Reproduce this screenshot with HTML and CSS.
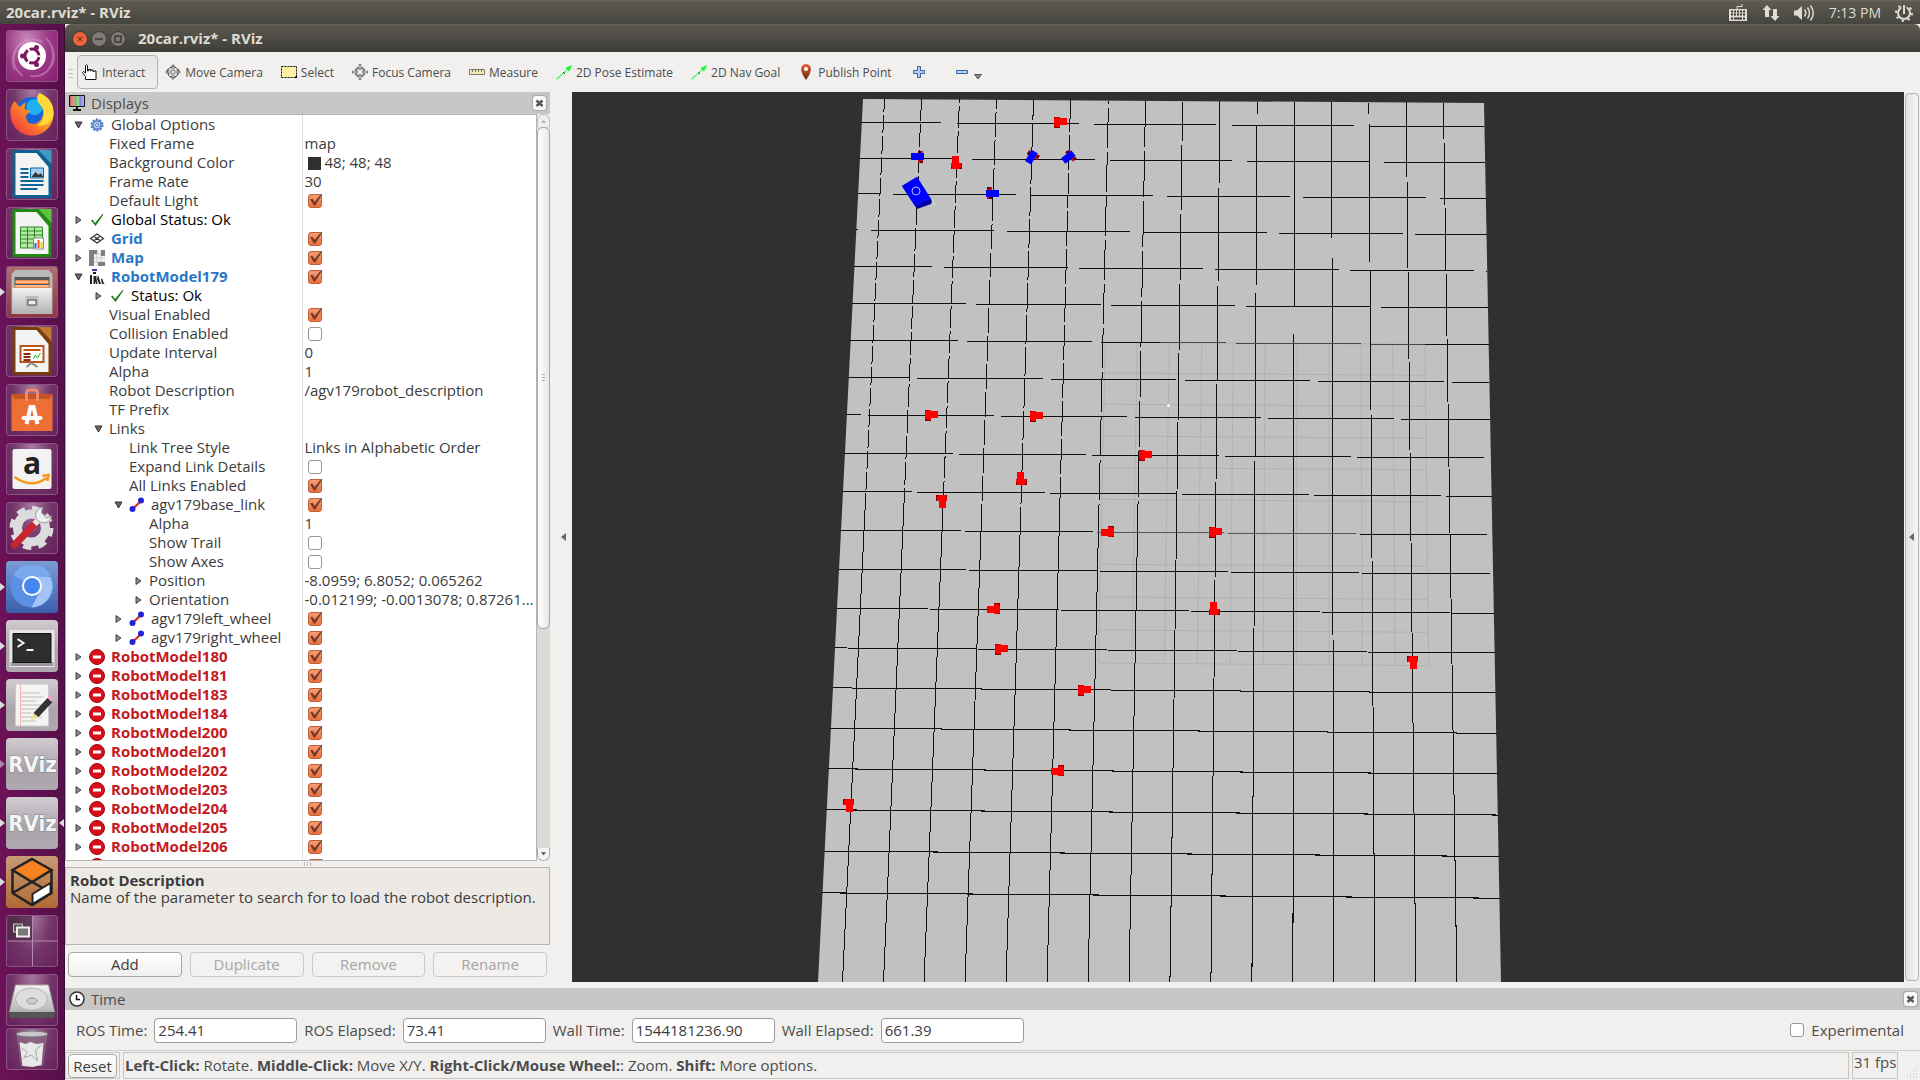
FILE: index.html
```html
<!DOCTYPE html>
<html lang="en">
<head>
<meta charset="utf-8">
<title>20car.rviz* - RViz</title>
<link rel="stylesheet" href="styles.css">
</head>
<body>
<svg class="sprite" aria-hidden="true">
  <defs>
    <linearGradient id="steel" x1="0" y1="0" x2="0" y2="1"><stop offset="0" stop-color="#f4f4f4"/><stop offset="1" stop-color="#b4b4b4"/></linearGradient>
    <linearGradient id="fox" x1="1" y1="0" x2="0" y2="1"><stop offset="0" stop-color="#fff04a"/><stop offset=".45" stop-color="#ff9a1c"/><stop offset="1" stop-color="#f0204c"/></linearGradient>
    <linearGradient id="pin" x1="0" y1="0" x2="0" y2="1"><stop offset="0" stop-color="#f0603a"/><stop offset="1" stop-color="#5a2a10"/></linearGradient>
    <linearGradient id="monitor" x1="0" y1="0" x2="1" y2="0"><stop offset="0" stop-color="#c86464"/><stop offset=".33" stop-color="#e0a0a0"/><stop offset=".34" stop-color="#64b464"/><stop offset=".66" stop-color="#a0e0a0"/><stop offset=".67" stop-color="#7878d8"/><stop offset="1" stop-color="#c0c0f4"/></linearGradient>
  </defs>
  <symbol id="open" viewBox="0 0 16 16"><path d="M5 5h7l-3.500 6z" fill="#666" stroke="#333"/></symbol>
  <symbol id="closed" viewBox="0 0 16 16"><path d="M6 4.500v7l5-3.500z" fill="#888" stroke="#444"/></symbol>
  <symbol id="gear" viewBox="0 0 16 16"><circle cx="8" cy="8" r="5.500" fill="#8fb4e0" stroke="#4a7cc0" stroke-width="2" stroke-dasharray="2 1.450"/><circle cx="8" cy="8" r="4" fill="#b4cdec" stroke="#4a7cc0"/><circle cx="8" cy="8" r="1.500" fill="#fff" stroke="#4a7cc0"/></symbol>
  <symbol id="ok" viewBox="0 0 16 16"><path d="M2 8.500l1.500-1L6 11 13.500 2l1 .500L6.500 14z" fill="#1c7a1c"/></symbol>
  <symbol id="grid" viewBox="0 0 16 16"><path d="M1.500 7.500L8 3l6.500 4.500L8 12zM4.700 9.700l6.600-4.400M4.700 5.300l6.600 4.400" fill="none" stroke="#333" stroke-width="1.200"/></symbol>
  <symbol id="map" viewBox="0 0 16 16"><path d="M0 0h16v16H0z" fill="#f6f6f6"/><path d="M4 0v16M8 0v16M12 0v16M0 4h16M0 8h16M0 12h16" stroke="#ccc"/><path d="M0 0h8v4H5v12H0zM12 0h4v6h-4zM9 12h7v4H9z" fill="#808080"/></symbol>
  <symbol id="robot" viewBox="0 0 16 16"><path d="M3 0h5v2H3z" fill="#33a"/><path d="M4 3h3v2H4zM1 6h2v9H1zM4.500 7h3v3l1 5H7l-1-3v3H4.500zM9 6l2 6 1 3h-2L8 10zM12 10c3-1 1 4 4 5h-3z" fill="#222"/></symbol>
  <symbol id="link" viewBox="0 0 16 16"><path d="M3.500 12L12 4" stroke="#e02020" stroke-width="2"/><circle cx="3.500" cy="12" r="3" fill="#2222d8"/><circle cx="12" cy="3.500" r="3" fill="#2222d8"/></symbol>
  <symbol id="stop" viewBox="0 0 16 16"><circle cx="8" cy="8" r="7.500" fill="#d80f18" stroke="#9c0a10"/><path d="M4 6.500h8v3H4z" fill="#fff"/></symbol>
  <symbol id="cross" viewBox="0 0 13 14"><path d="M3.500 4.500l6 5.500m0-5.500l-6 5.500" stroke="#555" stroke-width="2.400"/></symbol>
  <symbol id="arrow" viewBox="0 0 16 16"><path d="M0 15L11 5.500 9.500 4 16 1l-3 6.500-1.500-1.500L1 15.500z" fill="#0f2"/><path d="M7 8l2 2" stroke="#063"/></symbol>
  <symbol id="car" viewBox="-8 -8 16 16"><path d="M-6-5h6V6h-6z" fill="#8a0000"/><path d="M-6-4h2l1-1h3v1h7v7H0v2h-4l-2-2z" fill="#f00"/></symbol>
  <symbol id="bluecar" viewBox="-8 -8 16 16"><path d="M-5-6h5V6h-5z" fill="#c01020"/><path d="M-5-6h3v2h-3zM-3 4h3v2h-3z" fill="#500"/><path d="M-6-3H7v7H-6z" fill="#00f"/></symbol>
</svg>

<header class="panel">
  <span class="panel-title">20car.rviz* - RViz</span>
  <div class="indicators">
    <svg width="20" height="20" viewBox="0 0 20 20"><path d="M9 5V2.500h5V0" transform="translate(0 1)" fill="none" stroke="#dfdbd2"/><rect x="1" y="6" width="18" height="12" fill="#dfdbd2"/><path d="M3 8.500h14M3 11.500h14" stroke="#3c3b37" stroke-width="2" stroke-dasharray="2 1"/><path d="M3 15.500h2m1 0h8m1 0h2" stroke="#3c3b37" stroke-width="2"/></svg>
    <svg width="18" height="18" viewBox="0 0 18 18"><path d="M5 1l4.500 5H7v7H3V6H.500zM13 17l-4.500-5H11V5h4v7h2.500z" fill="#dfdbd2"/></svg>
    <svg width="21" height="18" viewBox="0 0 21 18"><path d="M0 6.500h3l5-4.500v14l-5-4.500H0z" fill="#dfdbd2"/><path d="M10.500 5.500q2.500 3.500 0 7M13.500 3.500q4 5.500 0 11M16.500 1.500q5.500 7.500 0 15" fill="none" stroke="#dfdbd2" stroke-width="1.500"/></svg>
    <time>7:13 PM</time>
    <svg width="18" height="18" viewBox="0 0 18 18"><circle cx="9" cy="9" r="6" fill="none" stroke="#dfdbd2" stroke-width="2"/><circle cx="9" cy="9" r="8" fill="none" stroke="#dfdbd2" stroke-width="2" stroke-dasharray="2.300 3.980"/><path d="M9 0v9" stroke="#4a4943" stroke-width="5"/><path d="M9 1v9" stroke="#dfdbd2" stroke-width="2"/></svg>
  </div>
</header>

<div class="desktop">
  <nav class="launcher" aria-label="Launcher">
    <a href="#" class="tile ubuntu" aria-label="Search"><svg viewBox="0 0 51 52"><path d="M8 40C0 18 20 4 36 12M16 46c-16-14-8-34 8-36M44 14c10 18-4 34-20 32M40 8c12 16 6 34-8 38" fill="none" stroke="#d79ccc" stroke-opacity=".5" stroke-width="2"/><circle cx="25.500" cy="26" r="14" fill="#fff"/><circle cx="25.500" cy="26" r="7" fill="none" stroke="#7c1a5e" stroke-width="3" stroke-dasharray="12.700 2" stroke-dashoffset="-1"/><circle cx="16" cy="26" r="2.500" fill="#7c1a5e"/><circle cx="30" cy="17.500" r="2.500" fill="#7c1a5e"/><circle cx="30" cy="34.500" r="2.500" fill="#7c1a5e"/></svg></a>
    <a href="#" class="tile" aria-label="Firefox"><svg viewBox="0 0 51 52"><circle cx="25" cy="24" r="16" fill="#1565d8"/><circle cx="28" cy="18" r="8" fill="#1fb0f4"/><path d="M8 12l5 6 6-5-1 7 6 2-5 5 2 6q6 4 11 0l3-3q4-8-1-14-6-6-1-12 14 6 14 20a21 21 0 0 1-43 2Q3 18 8 12z" fill="url(#fox)"/><path d="M33 4q-5 6 1 12 6 7 2 15l-5 6q14 0 16-12Q47 10 33 4z" fill="#ffd93a"/></svg></a>
    <a href="#" class="tile" aria-label="Writer"><svg viewBox="0 0 51 52"><path d="M6 2h26l13 14v34H6z" fill="#0f5f92"/><path d="M9 5h21l12 14v28H9z" fill="#f4f4f4"/><path d="M32 2h13v14z" fill="#3e9ac8"/><path d="M14 21h8m-8 4h8m-8 4h8m-8 4h23m-23 4h23m-23 4h17" stroke="#0e6499" stroke-width="2"/><path d="M24 20h13v10H24z" fill="#9fd0f0" stroke="#0e6499"/><path d="M25 29l4-5 3 3 2-2 3 4z" fill="#333"/></svg></a>
    <a href="#" class="tile" aria-label="Calc"><svg viewBox="0 0 51 52"><path d="M6 2h26l13 14v34H6z" fill="#1f8a12"/><path d="M9 5h21l12 14v28H9z" fill="#f4f4f4"/><path d="M32 2h13v14z" fill="#5cc43e"/><path d="M14 20h22v21H14z" fill="#b6e8a8" stroke="#2c8a1c"/><path d="M14 24h22m-22 4h22m-22 4h22m-22 4h22M21 20v21m7-21v21" stroke="#2c8a1c"/><path d="M27 31h10v11H27z" fill="#fff" stroke="#888"/><path d="M29 41v-5" stroke="#26c" stroke-width="2"/><path d="M32 41v-8" stroke="#e52" stroke-width="2"/><path d="M35 41v-6" stroke="#ec0" stroke-width="2"/></svg></a>
    <a href="#" class="tile files running" aria-label="Files"><svg viewBox="0 0 51 52"><path d="M5 8l4-4h33l4 4v40H5z" fill="#b9b9b9"/><path d="M8 11h35v12H8z" fill="#555"/><path d="M9 14h33v4H9zM8 19h35v4H8z" fill="#f08a44"/><path d="M9 16h33M9 20h33" stroke="#fff" stroke-width=".800"/><path d="M6 22h39v25H6z" fill="url(#steel)"/><path d="M19 30h13v12H19z" fill="#bbb"/><path d="M21.500 34h8v5h-8z" fill="#eee" stroke="#444"/></svg></a>
    <a href="#" class="tile" aria-label="Impress"><svg viewBox="0 0 51 52"><path d="M6 2h26l13 14v34H6z" fill="#7c3c0c"/><path d="M9 5h21l12 14v28H9z" fill="#f4f4f4"/><path d="M32 2h13v14z" fill="#c0782c"/><path d="M14 21h23v16H14z" fill="#fff" stroke="#b8541c" stroke-width="2"/><path d="M17 25h17" stroke="#b8541c" stroke-width="2"/><path d="M17 29h7m-7 3h7m-7 3h7" stroke="#8a3010" stroke-width="2"/><path d="M27 34l2-4 2 3 3-5" fill="none" stroke="#2a2"/><path d="M20 42l5-4 6 4" fill="none" stroke="#888" stroke-width="2"/></svg></a>
    <a href="#" class="tile" aria-label="Software"><svg viewBox="0 0 51 52"><path d="M5 10h41v37H5z" fill="#ec7036"/><path d="M5 10h41l-3 5H8z" fill="#c85424"/><path d="M20 17V9q0-3 3-3h5q3 0 3 3v8" fill="none" stroke="#f08a66" stroke-width="3"/><path d="M20 40l4-17h3l4 17" fill="none" stroke="#fff" stroke-width="4"/><path d="M17 34h17" stroke="#fff" stroke-width="4" stroke-linecap="round"/></svg></a>
    <a href="#" class="tile" aria-label="Amazon"><svg viewBox="0 0 51 52"><rect x="6" y="6" width="39" height="40" rx="2" fill="#f2f2f2"/><text x="25.500" y="31" class="amazon-a">a</text><path d="M8 34q17 12 32 1M36 33l6-1-1 6" fill="none" stroke="#f7981d" stroke-width="2.500"/></svg></a>
    <a href="#" class="tile" aria-label="System Settings"><svg viewBox="0 0 51 52"><circle cx="25" cy="26" r="14" fill="none" stroke="#dcdcdc" stroke-width="9"/><circle cx="25" cy="26" r="19" fill="none" stroke="#dcdcdc" stroke-width="6" stroke-dasharray="8 6.920"/><path d="M8 43l21-22" stroke="#c8252c" stroke-width="7" stroke-linecap="round"/><path d="M28 22l8-8" stroke="#e8e8e8" stroke-width="6"/><path d="M36 5a8 8 0 1 0 9 9l-5 2-5-5z" fill="#eee" stroke="#999"/></svg></a>
    <a href="#" class="tile chromium running" aria-label="Chromium"><svg viewBox="0 0 51 52"><circle cx="25.500" cy="25" r="21.500" fill="#5a8fe4"/><path d="M25.500 25L7 14a21.500 21.500 0 0 1 37 0z" fill="#7aa8ec"/><path d="M35 27l-10 19.500A21.500 21.500 0 0 0 44 16H28z" fill="#a4c4f6"/><circle cx="25.500" cy="25" r="10" fill="#fff"/><circle cx="25.500" cy="25" r="8" fill="#4486f0"/></svg></a>
    <a href="#" class="tile gray running" aria-label="Terminal"><svg viewBox="0 0 51 52"><path d="M3 10h45v37H3z" fill="#e8e8e8"/><path d="M4 42h43v4H4z" fill="#999"/><path d="M6.500 13.500h38v29h-38z" fill="#2e2e2e" stroke="#111"/><path d="M11 19l6 4-6 4M20 30h7" fill="none" stroke="#f4f4f4" stroke-width="2"/></svg></a>
    <a href="#" class="tile gray running" aria-label="Text Editor"><svg viewBox="0 0 51 52"><path d="M9 5h33v42H9z" fill="#f4f4f2" stroke="#ccc"/><path d="M14 5v42" stroke="#f4b4b4"/><path d="M15 14h18m-18 4h22m-22 4h15m-15 4h20m-20 4h18m-18 4h10m-10 4h20m-20 4h14" stroke="#bbb"/><path d="M24 42l3-8 5 4z" fill="#f0e090"/><path d="M27 34l14-15 5 4-14 15z" fill="#333"/><path d="M41 19l2-3 4 3-2 4z" fill="#f0a0d0"/></svg></a>
    <a href="#" class="tile gray running hollow" aria-label="RViz"><svg viewBox="0 0 51 52"><text x="26" y="34" class="rviz-logo">RViz</text></svg></a>
    <a href="#" class="tile gray running active" aria-label="RViz, active window"><svg viewBox="0 0 51 52"><text x="26" y="34" class="rviz-logo">RViz</text></svg></a>
    <a href="#" class="tile orange running" aria-label="Gazebo"><svg viewBox="0 0 51 52"><path d="M25.500 3L45 14 25.500 26 6 14z" fill="#f58220"/><path d="M25.500 3L45 14 25.500 26 6 14zM6 14v23l19.500 12L45 37V14M6 37l19.500-11L45 37" fill="none" stroke="#222" stroke-width="2.500"/><path d="M26 38l18-11v10L26 48z" fill="#fff" stroke="#222" stroke-width="2"/></svg></a>
    <a href="#" class="tile" aria-label="Workspace Switcher"><svg viewBox="0 0 51 52"><path d="M1 1h25v25H1z" fill="#4a2742" fill-opacity=".7"/><path d="M26 1v50M1 26h50" stroke="#b48aac"/><path d="M7 9h9v8H7z" fill="#555" stroke="#ccc"/><path d="M10.500 12.500h12v9h-12z" fill="#777" stroke="#eee" stroke-width="2"/></svg></a>
    <a href="#" class="tile" aria-label="Disk"><svg viewBox="0 0 51 52"><path d="M9 11h33l6 27H3z" fill="url(#steel)" stroke="#aaa"/><path d="M3 38h45v6H3z" fill="#555"/><ellipse cx="25" cy="25" rx="16" ry="11" fill="#ddd" stroke="#b4b4b4"/><ellipse cx="25.500" cy="27" rx="5" ry="3" fill="#ccc" stroke="#999"/></svg></a>
    <a href="#" class="tile trash" aria-label="Trash"><svg viewBox="0 0 51 42"><path d="M10 6h31l-4 32H14z" fill="#8a6a86" fill-opacity=".6"/><path d="M13 14l6 2 5-2 6 2 7-1-2 22-9 2-10-1z" fill="#e8e8e8"/><path d="M15 20l6 4-4 6 8-3 6 6-2-11 6-5" fill="none" stroke="#aaa"/><ellipse cx="25.500" cy="6" rx="16" ry="3" fill="#c8c8c8" stroke="#777"/></svg></a>
  </nav>

  <main class="window">
    <div class="titlebar">
      <button class="dot close" aria-label="Close"><svg viewBox="0 0 16 16"><path d="M5.500 5.500l5 5m0-5l-5 5" stroke="#5a2410"/></svg></button>
      <button class="dot" aria-label="Minimize"><svg viewBox="0 0 16 16"><path d="M4 8h8" stroke="#3a3934" stroke-width="1.500"/></svg></button>
      <button class="dot" aria-label="Maximize"><svg viewBox="0 0 16 16"><path d="M5 5h6v6H5z" fill="none" stroke="#3a3934" stroke-width="1.500"/></svg></button>
      <h1>20car.rviz* - RViz</h1>
    </div>

    <div class="toolbar" role="toolbar">
      <span class="grip"></span>
      <button class="tool pressed"><svg viewBox="0 0 16 16"><path d="M3.500 15.500v-3l-3-4 1-1 2 1.500V1.500q1-1.500 2 0V7h1V5.500h2V7h.500V6h2v1.500h1V7h2v8.500z" fill="#fff" stroke="#111"/></svg>Interact</button>
      <button class="tool"><svg viewBox="0 0 16 16"><path d="M8 .500l2.500 3H9V7h3.500V5.500l3 2.500-3 2.500V9H9v3.500h1.500l-2.500 3-2.500-3H7V9H3.500v1.500L.500 8l3-2.500V7H7V3.500H5.500z" fill="#ddd" stroke="#555" stroke-width=".700"/><path d="M8 2l6 4-2 6-4 2-4-2-2-6z" fill="none" stroke="#555"/></svg>Move Camera</button>
      <button class="tool"><svg viewBox="0 0 16 16"><path d="M.500 2.500h15v11H.500z" fill="#fff0a8" stroke="#111" stroke-dasharray="2 1"/><path d="M13 14h3v-3z"/></svg>Select</button>
      <button class="tool"><svg viewBox="0 0 16 16"><circle cx="8" cy="8" r="4.500" fill="none" stroke="#777" stroke-width="2"/><path d="M8 0v6m0 4v6M0 8h6m4 0h6" stroke="#777" stroke-width="2.500"/><path d="M8 1v4m0 6v4M1 8h4m6 0h4" stroke="#ddd"/></svg>Focus Camera</button>
      <button class="tool"><svg viewBox="0 0 16 16"><path d="M.500 5.500h15v5H.500z" fill="#f4e8a8" stroke="#777"/><path d="M3.500 5v3m3-3v3m3-3v3m3-3v3" stroke="#777"/></svg>Measure</button>
      <button class="tool"><svg viewBox="0 0 16 16"><use href="#arrow"/></svg>2D Pose Estimate</button>
      <button class="tool"><svg viewBox="0 0 16 16"><use href="#arrow"/></svg>2D Nav Goal</button>
      <button class="tool"><svg viewBox="0 0 16 16"><path d="M8 0a5 5 0 0 1 5 5q0 4-5 11Q3 9 3 5a5 5 0 0 1 5-5z" fill="url(#pin)"/><circle cx="8" cy="5" r="2" fill="#fff"/></svg>Publish Point</button>
      <button class="tool icon-only" aria-label="Add tool"><svg viewBox="0 0 16 16"><path d="M6.500 2.500h3v4h4v3h-4v4h-3v-4h-4v-3h4z" fill="#b4cdf0" stroke="#3465a4"/></svg></button>
      <button class="tool menu" aria-label="Remove tool"><svg viewBox="0 0 16 16"><path d="M2.500 6.500h11v3h-11z" fill="#b4cdf0" stroke="#3465a4"/></svg><svg class="drop" viewBox="0 0 8 8"><path d="M.500 2.500h7L4 7z" fill="#888" stroke="#555"/></svg></button>
    </div>

    <div class="workspace">
      <section class="displays">
        <div class="dock-title">
          <svg viewBox="0 0 16 16"><path d="M.500.500h15v11H.500z" fill="url(#monitor)" stroke="#111"/><path d="M8 11v3M4 15h8" stroke="#111" stroke-width="2"/></svg>
          <h2>Displays</h2>
          <button class="dock-close" aria-label="Close Displays"><svg viewBox="0 0 13 14"><use href="#cross"/></svg></button>
        </div>
        <div class="tree-box">
          <div class="tree">
            <table>
              <colgroup><col class="names"><col></colgroup>
              <tbody>
                <tr><td><div class="node"><svg><use href="#open"/></svg><svg><use href="#gear"/></svg>Global Options</div></td><td></td></tr>
                <tr><td><div class="node l1 leaf">Fixed Frame</div></td><td>map</td></tr>
                <tr><td><div class="node l1 leaf">Background Color</div></td><td><span class="swatch"></span>48; 48; 48</td></tr>
                <tr><td><div class="node l1 leaf">Frame Rate</div></td><td>30</td></tr>
                <tr><td><div class="node l1 leaf">Default Light</div></td><td><input type="checkbox" checked aria-label="Default Light"></td></tr>
                <tr class="status"><td><div class="node"><svg><use href="#closed"/></svg><svg><use href="#ok"/></svg>Global Status: Ok</div></td><td></td></tr>
                <tr class="display"><td><div class="node"><svg><use href="#closed"/></svg><svg><use href="#grid"/></svg>Grid</div></td><td><input type="checkbox" checked aria-label="Grid"></td></tr>
                <tr class="display"><td><div class="node"><svg><use href="#closed"/></svg><svg><use href="#map"/></svg>Map</div></td><td><input type="checkbox" checked aria-label="Map"></td></tr>
                <tr class="display"><td><div class="node"><svg><use href="#open"/></svg><svg><use href="#robot"/></svg>RobotModel179</div></td><td><input type="checkbox" checked aria-label="RobotModel179"></td></tr>
                <tr class="status"><td><div class="node l1"><svg><use href="#closed"/></svg><svg><use href="#ok"/></svg>Status: Ok</div></td><td></td></tr>
                <tr><td><div class="node l1 leaf">Visual Enabled</div></td><td><input type="checkbox" checked aria-label="Visual Enabled"></td></tr>
                <tr><td><div class="node l1 leaf">Collision Enabled</div></td><td><input type="checkbox" aria-label="Collision Enabled"></td></tr>
                <tr><td><div class="node l1 leaf">Update Interval</div></td><td>0</td></tr>
                <tr><td><div class="node l1 leaf">Alpha</div></td><td>1</td></tr>
                <tr><td><div class="node l1 leaf">Robot Description</div></td><td>/agv179robot_description</td></tr>
                <tr><td><div class="node l1 leaf">TF Prefix</div></td><td></td></tr>
                <tr><td><div class="node l1 bare"><svg><use href="#open"/></svg>Links</div></td><td></td></tr>
                <tr><td><div class="node l2 leaf">Link Tree Style</div></td><td>Links in Alphabetic Order</td></tr>
                <tr><td><div class="node l2 leaf">Expand Link Details</div></td><td><input type="checkbox" aria-label="Expand Link Details"></td></tr>
                <tr><td><div class="node l2 leaf">All Links Enabled</div></td><td><input type="checkbox" checked aria-label="All Links Enabled"></td></tr>
                <tr><td><div class="node l2"><svg><use href="#open"/></svg><svg><use href="#link"/></svg>agv179base_link</div></td><td><input type="checkbox" checked aria-label="agv179base_link"></td></tr>
                <tr><td><div class="node l3 leaf">Alpha</div></td><td>1</td></tr>
                <tr><td><div class="node l3 leaf">Show Trail</div></td><td><input type="checkbox" aria-label="Show Trail"></td></tr>
                <tr><td><div class="node l3 leaf">Show Axes</div></td><td><input type="checkbox" aria-label="Show Axes"></td></tr>
                <tr><td><div class="node l3 bare"><svg><use href="#closed"/></svg>Position</div></td><td>-8.0959; 6.8052; 0.065262</td></tr>
                <tr><td><div class="node l3 bare"><svg><use href="#closed"/></svg>Orientation</div></td><td>-0.012199; -0.0013078; 0.87261...</td></tr>
                <tr><td><div class="node l2"><svg><use href="#closed"/></svg><svg><use href="#link"/></svg>agv179left_wheel</div></td><td><input type="checkbox" checked aria-label="agv179left_wheel"></td></tr>
                <tr><td><div class="node l2"><svg><use href="#closed"/></svg><svg><use href="#link"/></svg>agv179right_wheel</div></td><td><input type="checkbox" checked aria-label="agv179right_wheel"></td></tr>
                <tr class="error"><td><div class="node"><svg><use href="#closed"/></svg><svg><use href="#stop"/></svg>RobotModel180</div></td><td><input type="checkbox" checked aria-label="RobotModel180"></td></tr>
                <tr class="error"><td><div class="node"><svg><use href="#closed"/></svg><svg><use href="#stop"/></svg>RobotModel181</div></td><td><input type="checkbox" checked aria-label="RobotModel181"></td></tr>
                <tr class="error"><td><div class="node"><svg><use href="#closed"/></svg><svg><use href="#stop"/></svg>RobotModel183</div></td><td><input type="checkbox" checked aria-label="RobotModel183"></td></tr>
                <tr class="error"><td><div class="node"><svg><use href="#closed"/></svg><svg><use href="#stop"/></svg>RobotModel184</div></td><td><input type="checkbox" checked aria-label="RobotModel184"></td></tr>
                <tr class="error"><td><div class="node"><svg><use href="#closed"/></svg><svg><use href="#stop"/></svg>RobotModel200</div></td><td><input type="checkbox" checked aria-label="RobotModel200"></td></tr>
                <tr class="error"><td><div class="node"><svg><use href="#closed"/></svg><svg><use href="#stop"/></svg>RobotModel201</div></td><td><input type="checkbox" checked aria-label="RobotModel201"></td></tr>
                <tr class="error"><td><div class="node"><svg><use href="#closed"/></svg><svg><use href="#stop"/></svg>RobotModel202</div></td><td><input type="checkbox" checked aria-label="RobotModel202"></td></tr>
                <tr class="error"><td><div class="node"><svg><use href="#closed"/></svg><svg><use href="#stop"/></svg>RobotModel203</div></td><td><input type="checkbox" checked aria-label="RobotModel203"></td></tr>
                <tr class="error"><td><div class="node"><svg><use href="#closed"/></svg><svg><use href="#stop"/></svg>RobotModel204</div></td><td><input type="checkbox" checked aria-label="RobotModel204"></td></tr>
                <tr class="error"><td><div class="node"><svg><use href="#closed"/></svg><svg><use href="#stop"/></svg>RobotModel205</div></td><td><input type="checkbox" checked aria-label="RobotModel205"></td></tr>
                <tr class="error"><td><div class="node"><svg><use href="#closed"/></svg><svg><use href="#stop"/></svg>RobotModel206</div></td><td><input type="checkbox" checked aria-label="RobotModel206"></td></tr>
                <tr class="error"><td><div class="node"><svg><use href="#closed"/></svg><svg><use href="#stop"/></svg>RobotModel207</div></td><td><input type="checkbox" checked aria-label="RobotModel207"></td></tr>
              </tbody>
            </table>
          </div>
          <div class="scrollbar">
            <span class="step"><svg viewBox="0 0 8 8"><path d="M1 5.500h6L4 2.500z" fill="#aaa"/></svg></span>
            <span class="thumb"><i></i><i></i><i></i></span>
            <span class="track"></span>
            <span class="step down"><svg viewBox="0 0 8 8"><path d="M1 2.500h6L4 6z" fill="#555"/></svg></span>
          </div>
        </div>
        <div class="splitter"><i></i><i></i><i></i></div>
        <div class="help"><strong>Robot Description</strong><p>Name of the parameter to search for to load the robot description.</p></div>
        <div class="actions">
          <button>Add</button>
          <button disabled>Duplicate</button>
          <button disabled>Remove</button>
          <button disabled>Rename</button>
        </div>
      </section>

      <button class="collapse" aria-label="Collapse left panel"><svg viewBox="0 0 8 8"><path d="M6 0v8L1 4z" fill="#666"/></svg></button>

      <svg class="view" viewBox="572 92 1332 890" preserveAspectRatio="xMidYMid slice" role="img" aria-label="3D view of the map and robots">
        <path d="M863 99L1484 103L1501 982H818z" fill="#c1c1c1"/>
        <g fill="none" stroke="#adadad" stroke-width=".8">
          <path d="M1105.300 342.300L1098.300 663M1137.300 342.500L1131.700 663.300M1169.300 342.700L1164.300 663.500M1201.700 343L1197.300 663.800M1233.300 343.200L1230.300 664M1265 343.400L1263.300 664.300M1297 343.600L1296.300 664.500M1329 343.800L1329.300 664.800M1361 344L1362.300 665M1392.700 344.200L1395.300 665.300M1425 344.300L1428.700 665.700"/>
          <path d="M1105.300 342.300L1425 344.300M1104.600 373L1425.400 375.300M1104 404.300L1425.800 406.300M1103.300 436L1426 438.300M1102.600 467.700L1426.500 469.700M1101.900 499.300L1426.800 501.700M1101.200 532.300L1427.200 534.300M1100.500 564.300L1427.600 566.300M1099.700 597L1428 599.300M1099 630L1428.300 632.300M1098.300 663L1428.700 665.700"/>
        </g>
        <g fill="none" stroke="#111" stroke-width="1" shape-rendering="crispEdges">
          <path stroke-dasharray="18 3" stroke-dashoffset="5" d="M884.500 99L865 510"/>
          <path stroke-dasharray="23 3" stroke-dashoffset="1" d="M921.500 99L903.700 510"/>
          <path stroke-dasharray="22 3" stroke-dashoffset="18" d="M959.500 99L942.900 510"/>
          <path stroke-dasharray="25 3" stroke-dashoffset="15" d="M996.500 99L981.800 510"/>
          <path stroke-dasharray="29 3" stroke-dashoffset="9" d="M1033.500 100L1020.800 510"/>
          <path stroke-dasharray="35 3" stroke-dashoffset="3" d="M1070.500 100L1059.700 510"/>
          <path stroke-dasharray="40 4" stroke-dashoffset="37" d="M1108.500 101L1098.900 510"/>
          <path stroke-dasharray="46 4" d="M1145.500 101L1137.900 510"/>
          <path d="M865 510L842.500 982M903.700 510L883.500 982M942.900 510L924 982M981.800 510L965 982M1020.800 510L1006 982M1059.700 510L1047 982M1098.900 510L1088 982M1137.900 510L1129 982"/>
        </g>
        <g fill="none" stroke="#111" stroke-width="3" shape-rendering="crispEdges">
          <path transform="translate(820 90) scale(.333333)" d="M124 97.500H362M412 100.500H777M822 103.500H1020M119 205.500H412M456 208.500H825M870 211.500H1020M114 310.500H182M219 313.500H588M631 316.500H999M108 418.500H114M153 421.500H522M561 424.500H930M970 427.500H1020M102 529.500H336M372 532.500H743M777 535.500H1020M96 640.500H438M468 643.500H843M873 646.500H1020M90 751.500H413M441 754.500H816M843 757.500H1020M84 862.500H269M291 865.500H669M693 868.500H1020M78 973.500H123M144 976.500H522M543 979.500H921M945 982.500H1020M72 1090.500H399M417 1093.500H798M816 1096.500H1020"/>
          <path transform="translate(1160 90) scale(.333333)" d="M0 103.500H168M216 106.500H582M628 109.500H972M0 211.500H216M261 214.500H628M672 217.500H975M21 319.500H390M429 322.500H798M840 325.500H978M0 427.500H321M357 430.500H729M765 433.500H980M0 535.500H129M165 538.500H537M570 541.500H942M978 544.500H981M0 646.500H225M258 649.500H631M663 652.500H984M795 763.500H987M0 868.500H48M75 871.500H450M474 874.500H852M876 877.500H988M0 982.500H303M324 985.500H702M723 988.500H990M0 1096.500H177M195 1099.500H573M591 1102.500H972M67.500 36V153M64.500 165V360M61.500 372V570M58.500 582V780M55.500 789V990M52.500 996V1197M178.500 33V279M175.500 294V573M172.500 588V870M169.500 882V1167M166.500 1176V1460M292.500 36V72M289.500 108V585M286.500 609V1099M283.500 1113V1608M403.500 36V650M400.500 732V2498M514.500 36V444M517.500 504V1635M625.500 39V72M628.500 102V516M631.500 541V960M634.500 975V1404M739.500 36V261M742.500 276V534M745.500 546V807M748.500 816V1080M751.500 1089V1353M850.500 39V147M853.500 159V345M856.500 354V541M859.500 552V738M862.500 747V936M865.500 942V1131M868.500 1137V1329"/>
          <path transform="translate(1160 90) scale(.333333)" stroke="#484848" d="M0 757.500H198M228 760.500H603M633 763.500H795"/>
          <path transform="translate(810 480) scale(.333333)" d="M99 34.500H306M321 37.500H705M720 40.500H1050M92 151.500H453M465 154.500H849M86 268.500H468M477 271.500H862M870 274.500H1050M80 385.500H354M360 388.500H747M753 391.500H1050M74 502.500H111M114 505.500H499M504 508.500H891M894 511.500H1050M68 622.500H126M126 625.500H515M513 628.500H903M903 631.500H1050M60 745.500H395M393 748.500H783M777 751.500H1050M54 865.500H144M135 868.500H528M522 871.500H912M906 874.500H1050M48 988.500H141M129 991.500H525M513 994.500H909M897 997.500H1050M42 1114.500H384M369 1117.500H765M750 1120.500H1050M36 1237.500H111M90 1240.500H489M471 1243.500H867M849 1246.500H1050"/>
          <path transform="translate(810 480) scale(.333333)" stroke="#585858" d="M861 157.500H1242M1254 160.500H1638"/>
          <path transform="translate(1160 480) scale(.333333)" d="M0 40.500H48M66 43.500H447M462 46.500H843M858 49.500H995M600 163.500H981M0 274.500H204M213 277.500H597M606 280.500H990M0 391.500H87M93 394.500H480M486 397.500H870M874 400.500H1002M0 511.500H231M234 514.500H621M624 517.500H1005M0 631.500H243M240 634.500H630M627 637.500H1008M0 751.500H120M114 754.500H504M501 757.500H891M888 760.500H1011M0 874.500H249M240 877.500H633M624 880.500H1011M0 997.500H240M228 1000.500H624M612 1003.500H1008M996 1006.500H1014M0 1120.500H96M81 1123.500H480M465 1126.500H861M846 1129.500H1017M0 1246.500H198M180 1249.500H576M558 1252.500H957M939 1255.500H1020M49.500 33V237M46.500 240V447M43.500 450V654M40.500 657V864M37.500 864V1073M34.500 1071V1280M31.500 1278V1491M28.500 1488V1506M163.500 300V591M160.500 594V888M157.500 888V1185M154.500 1182V1480M151.500 1476V1506M280.500 444V950M277.500 948V1461M274.500 1449V1506M397.500 1299V1506M520.500 480V1506M637.500 243V678M640.500 681V1122M643.500 1119V1506M754.500 189V456M757.500 459V729M760.500 729V999M763.500 999V1272M766.500 1269V1506M871.500 163V354M874.500 357V552M877.500 555V750M880.500 750V945M883.500 945V1142M886.500 1140V1340M889.500 1335V1506"/>
        </g>
        <circle cx="1168.500" cy="405.500" r="1.500" fill="#fff"/>
        <g>
          <use href="#car" width="16" height="16" transform="translate(1060 122) translate(-8 -8)"/>
          <use href="#car" width="16" height="16" transform="translate(931 415) translate(-8 -8)"/>
          <use href="#car" width="16" height="16" transform="translate(1036 416) translate(-8 -8)"/>
          <use href="#car" width="16" height="16" transform="translate(1145 455) translate(-8 -8)"/>
          <use href="#car" width="16" height="16" transform="translate(1215 532) translate(-8 -8)"/>
          <use href="#car" width="16" height="16" transform="translate(1001 649) translate(-8 -8)"/>
          <use href="#car" width="16" height="16" transform="translate(1084 690) translate(-8 -8)"/>
          <use href="#car" width="16" height="16" transform="translate(956 163) rotate(-90) translate(-8 -8)"/>
          <use href="#car" width="16" height="16" transform="translate(1021 479) rotate(-90) translate(-8 -8)"/>
          <use href="#car" width="16" height="16" transform="translate(1214 609) rotate(-90) translate(-8 -8)"/>
          <use href="#car" width="16" height="16" transform="translate(1108 532) rotate(180) translate(-8 -8)"/>
          <use href="#car" width="16" height="16" transform="translate(994 609) rotate(180) translate(-8 -8)"/>
          <use href="#car" width="16" height="16" transform="translate(1058 771) rotate(180) translate(-8 -8)"/>
          <use href="#car" width="16" height="16" transform="translate(942 501) rotate(90) translate(-8 -8)"/>
          <use href="#car" width="16" height="16" transform="translate(849 805) rotate(90) translate(-8 -8)"/>
          <use href="#car" width="16" height="16" transform="translate(1413 662) rotate(90) translate(-8 -8)"/>
          <use href="#bluecar" width="16" height="16" transform="translate(918 157) rotate(180) translate(-8 -8)"/>
          <use href="#bluecar" width="16" height="16" transform="translate(992 193) translate(-8 -8)"/>
          <use href="#bluecar" width="16" height="16" transform="translate(1032 157) rotate(120) translate(-8 -8)"/>
          <use href="#bluecar" width="16" height="16" transform="translate(1069 157) rotate(142) translate(-8 -8)"/>
          <path d="M902 186L917 177L932 201L931 204L917 209L915 206z" fill="#00009a"/>
          <path d="M902 186L917 177L931 199L915 206z" fill="#00f"/>
          <path d="M932 200l3 5" stroke="#ddd"/>
          <circle cx="916" cy="191" r="4" fill="none" stroke="#b8b8ff"/>
        </g>
      </svg>

      <button class="collapse right" aria-label="Collapse right panel"><svg viewBox="0 0 8 8"><path d="M6 0v8L1 4z" fill="#666"/></svg></button>
    </div>

    <section class="time">
      <div class="dock-title">
        <svg viewBox="0 0 16 16"><circle cx="8" cy="8" r="7" fill="#fff" stroke="#333" stroke-width="1.500"/><path d="M7.500 4v4.500H11" fill="none" stroke="#111" stroke-width="1.500"/></svg>
        <h2>Time</h2>
        <button class="dock-close" aria-label="Close Time"><svg viewBox="0 0 13 14"><use href="#cross"/></svg></button>
      </div>
      <div class="clocks">
        <label for="ros-time">ROS Time:</label><input type="text" id="ros-time" value="254.41" readonly>
        <label for="ros-elapsed">ROS Elapsed:</label><input type="text" id="ros-elapsed" value="73.41" readonly>
        <label for="wall-time">Wall Time:</label><input type="text" id="wall-time" value="1544181236.90" readonly>
        <label for="wall-elapsed">Wall Elapsed:</label><input type="text" id="wall-elapsed" value="661.39" readonly>
        <input type="checkbox" id="experimental"><label for="experimental">Experimental</label>
      </div>
    </section>

    <footer class="statusbar">
      <div class="cell"><button>Reset</button></div>
      <div class="cell hint"><b>Left-Click:</b> Rotate. <b>Middle-Click:</b> Move X/Y. <b>Right-Click/Mouse Wheel:</b>: Zoom. <b>Shift:</b> More options.</div>
      <div class="cell fps">31 fps</div>
      <svg class="resize" viewBox="0 0 12 12"><path d="M10 1h2M7 4h5M4 7h8M1 10h11" stroke="#bbb" stroke-dasharray="1 2"/></svg>
    </footer>
  </main>
</div>
</body>
</html>
```
FILE: styles.css
```css
* { box-sizing: border-box; }

html, body { height: 100%; }

body {
  margin: 0;
  display: flex;
  flex-direction: column;
  overflow: hidden;
  background: #2c001e;
  color: #4c4c4c;
  font: 15px/19px "Open Sans", "Noto Sans", sans-serif;
}

button, input { font: inherit; color: inherit; margin: 0; }
button { padding: 0; border: 0; background: none; }
h1, h2, p { margin: 0; font-size: inherit; font-weight: inherit; }
svg { display: block; flex: none; }
.sprite { position: absolute; width: 0; height: 0; }

/* Top panel */
.panel {
  flex: none;
  height: 24px;
  padding: 0 7px 0 6px;
  display: flex;
  align-items: center;
  justify-content: space-between;
  background: linear-gradient(#5d5b52, #45443e);
  border-top: 1px solid #6a6852;
  color: #dfdbd2;
}
.panel-title { font-weight: 700; }
.indicators { display: flex; align-items: center; gap: 14px; font-size: 14px; }

.desktop { flex: 1; min-height: 0; display: flex; }

/* Launcher */
.launcher {
  flex: none;
  width: 65px;
  padding: 6px 0 0 6px;
  display: flex;
  flex-direction: column;
  gap: 7px;
  background: linear-gradient(90deg, #6b1258, #56104a);
  border-right: 1px solid #3c0a33;
}
.tile {
  position: relative;
  flex: none;
  width: 52px;
  height: 52px;
  border-radius: 4px;
  background: radial-gradient(ellipse at 50% 0, #a97ca2, #74376a 50%, #63205a);
  box-shadow: inset 0 0 0 1px #8a5582;
}
.tile svg { width: 100%; height: 100%; }
.tile.ubuntu { background: radial-gradient(ellipse at 40% 20%, #c88abc, #9a3a86 50%, #8a1a70); }
.tile.files { background: linear-gradient(#b07070, #8c3344); }
.tile.chromium { background: linear-gradient(#7c9cd4, #3a5fae); box-shadow: none; }
.tile.gray { background: linear-gradient(#d0ccd0, #aaa4aa 60%, #b0a8b0); box-shadow: none; }
.tile.orange { background: linear-gradient(#c89a78, #b06a34); box-shadow: none; }
.tile.trash { height: 42px; margin-top: -5px; }
.running::before,
.active::after {
  content: "";
  position: absolute;
  top: 22px;
  left: -6px;
  border: 4px solid transparent;
  border-left: 5px solid #ddd;
  border-right: 0;
}
.hollow::before { border-left-color: #a787a2; }
.active::after {
  left: auto;
  right: -6px;
  border-left: 0;
  border-right: 5px solid #ddd;
}
.amazon-a { font: 700 30px "Open Sans", sans-serif; text-anchor: middle; fill: #222; }
.rviz-logo { font: 700 22px "DejaVu Sans Condensed", sans-serif; text-anchor: middle; fill: #f4f4f4; stroke: #8a868a; stroke-width: 1px; paint-order: stroke; }

/* Window */
.window {
  flex: 1;
  min-width: 0;
  display: flex;
  flex-direction: column;
  background: #f1f0ee;
}
.titlebar {
  flex: none;
  height: 28px;
  padding-left: 7px;
  display: flex;
  align-items: center;
  gap: 3px;
  background: linear-gradient(#5a5850, #3e3d38);
  border-top: 1px solid #66644e;
  border-radius: 6px 6px 0 0;
  color: #dfdbd2;
  font-weight: 700;
}
.titlebar h1 { margin-left: 9px; }
.dot {
  width: 16px;
  height: 16px;
  border-radius: 50%;
  background: #7d7b73;
  border: 1px solid #3a3934;
}
.dot svg { margin: -1px; width: 16px; height: 16px; }
.dot.close { background: #ee6338; }

.toolbar {
  flex: none;
  height: 40px;
  padding: 3px 4px;
  display: flex;
  align-items: stretch;
  gap: 2px;
  font-size: 12px;
}
.grip {
  width: 4px;
  height: 9px;
  margin: 14px 2px 0 0;
  background: repeating-linear-gradient(#bbb 0 1px, transparent 1px 4px);
}
.tool {
  display: flex;
  align-items: center;
  gap: 4px;
  padding: 0 11px 0 5px;
  white-space: nowrap;
}
.tool svg { width: 16px; height: 16px; }
.tool.pressed {
  border: 1px solid #b4b2ae;
  border-radius: 4px;
  padding: 0 12px 0 4px;
  background: linear-gradient(#e6e5e3, #f0efed);
}
.tool.icon-only { padding-left: 6px; padding-right: 20px; }
.tool.menu { padding-right: 0; }
.tool .drop { width: 8px; height: 8px; margin-top: 8px; }

.workspace { flex: 1; min-height: 0; display: flex; }

/* Docks */
.displays { flex: none; width: 485px; display: flex; flex-direction: column; }
.dock-title {
  flex: none;
  height: 22px;
  padding: 0 4px;
  display: flex;
  align-items: center;
  gap: 6px;
  background: #c7c7c7;
}
.dock-title svg { width: 16px; height: 16px; }
.dock-close {
  width: 13px;
  height: 14px;
  margin-left: auto;
  border-radius: 3px;
  background: #f8f8f8;
  box-shadow: 0 0 1px 1px #aaa;
}
.dock-title .dock-close svg { width: 13px; height: 14px; }

.tree-box { flex: 1; min-height: 0; display: flex; }
.tree {
  flex: 1;
  overflow: hidden;
  background: #fff;
  border: 1px solid #b8b5b0;
  color: #3c3c3c;
}
.tree table { width: 100%; table-layout: fixed; border-collapse: collapse; }
.names { width: 236px; }
.tree tr { height: 19px; }
.tree td { padding: 0; height: 19px; white-space: nowrap; }
.tree td + td { padding-left: 2px; border-left: 1px solid #ddd; }
.tree td + td input { display: block; margin-left: 3px; }
.node { display: flex; align-items: center; gap: 6px; height: 19px; padding-left: 4px; }
.node svg { width: 16px; height: 16px; }
.node svg:first-child { margin-right: -3px; }
.l1 { padding-left: 24px; }
.l2 { padding-left: 44px; }
.l3 { padding-left: 64px; }
.leaf::before { content: ""; width: 16px; margin-right: -3px; }
.status { color: #000; }
.display { color: #2a76c6; font-weight: 700; }
.error { color: #c41a1e; font-weight: 700; }
.swatch {
  display: inline-block;
  width: 13px;
  height: 13px;
  margin: 0 4px 0 3px;
  vertical-align: -2px;
  background: #303030;
}

input[type="checkbox"] {
  appearance: none;
  width: 14px;
  height: 14px;
  border: 1px solid #999792;
  border-radius: 3px;
  background: #fff;
}
input[type="checkbox"]:checked { background: linear-gradient(#f79a70, #ee7040); border-color: #c0603a; }
input[type="checkbox"]:checked::after {
  content: "";
  display: block;
  width: 14px;
  height: 13px;
  margin-top: -1px;
  background: #6e3c28;
  clip-path: polygon(12% 45%, 28% 40%, 44% 66%, 90% 4%, 100% 4%, 48% 92%, 38% 92%);
}

.scrollbar {
  width: 13px;
  display: flex;
  flex-direction: column;
  background: #dcdad7;
  border-radius: 6px;
}
.step {
  height: 13px;
  padding: 3px 2px 0;
  border: 1px solid #c4c2be;
  border-bottom: 0;
  border-radius: 6px 6px 0 0;
  background: #efeeec;
}
.step svg { width: 7px; height: 7px; }
.step.down { border: 1px solid #b0aeaa; border-top: 0; border-radius: 0 0 6px 6px; padding-top: 2px; background: #f4f4f2; }
.thumb {
  flex: 501;
  border: 1px solid #a8a6a2;
  border-radius: 6px;
  background: linear-gradient(90deg, #fff, #eae8e5);
  display: flex;
  flex-direction: column;
  align-items: center;
  justify-content: center;
  gap: 2px;
}
.thumb i { width: 3px; height: 1px; background: #aaa; }
.track { flex: 220; }

.splitter { flex: none; height: 6px; display: flex; align-items: center; justify-content: center; gap: 2px; }
.splitter i { width: 1px; height: 4px; background: #bbb; }
.help {
  flex: none;
  height: 78px;
  padding: 4px;
  border: 1px solid #b8b5b0;
  background: #edeae6;
  color: #3c3c3c;
  line-height: 17px;
}
.actions { flex: none; display: grid; grid-template-columns: repeat(4, 1fr); gap: 8px; padding: 7px 3px 5px; }
.actions button,
.statusbar button {
  height: 25px;
  border: 1px solid #a8a6a2;
  border-radius: 4px;
  background: linear-gradient(#fff, #f0efed);
  color: #3c3c3c;
}
.actions button:disabled { border-color: #cccac6; background: #f3f2f0; color: #a6a6a6; }

.collapse { flex: none; width: 22px; display: flex; align-items: center; justify-content: center; padding-left: 6px; }
.collapse svg { width: 8px; height: 8px; }
.collapse.right {
  width: 14px;
  margin: 1px;
  padding: 0;
  border: 1px solid #b4b2ae;
  border-radius: 4px;
  background: linear-gradient(90deg, #e2e0de, #f6f6f4);
}
.view { flex: 1; min-width: 0; height: 100%; background: #303030; }

/* Time dock */
.time { flex: none; padding-top: 6px; }
.time .dock-title { padding-right: 3px; }
.clocks { height: 40px; padding: 0 16px 0 11px; display: flex; align-items: center; gap: 7px; }
.clocks input[type="text"] {
  width: 143px;
  height: 25px;
  padding: 0 3px;
  border: 1px solid #a09e9a;
  border-radius: 4px;
  background: #fff;
  color: #3c3c3c;
}
.clocks input[type="checkbox"] { margin-left: auto; }

/* Status bar */
.statusbar {
  flex: none;
  height: 30px;
  padding: 1px 0;
  border-top: 1px solid #d0ceca;
  display: flex;
  gap: 3px;
}
.cell { border: 1px solid #c8c6c2; line-height: 25px; }
.statusbar button { display: block; width: 49px; height: 24px; margin: 1px 2px; line-height: 22px; }
.hint { flex: 1; padding-left: 1px; white-space: nowrap; overflow: hidden; }
.fps { width: 46px; padding-left: 1px; line-height: 18px; white-space: nowrap; }
.resize { width: 12px; height: 12px; align-self: flex-end; margin: 0 2px 0 5px; }
```
